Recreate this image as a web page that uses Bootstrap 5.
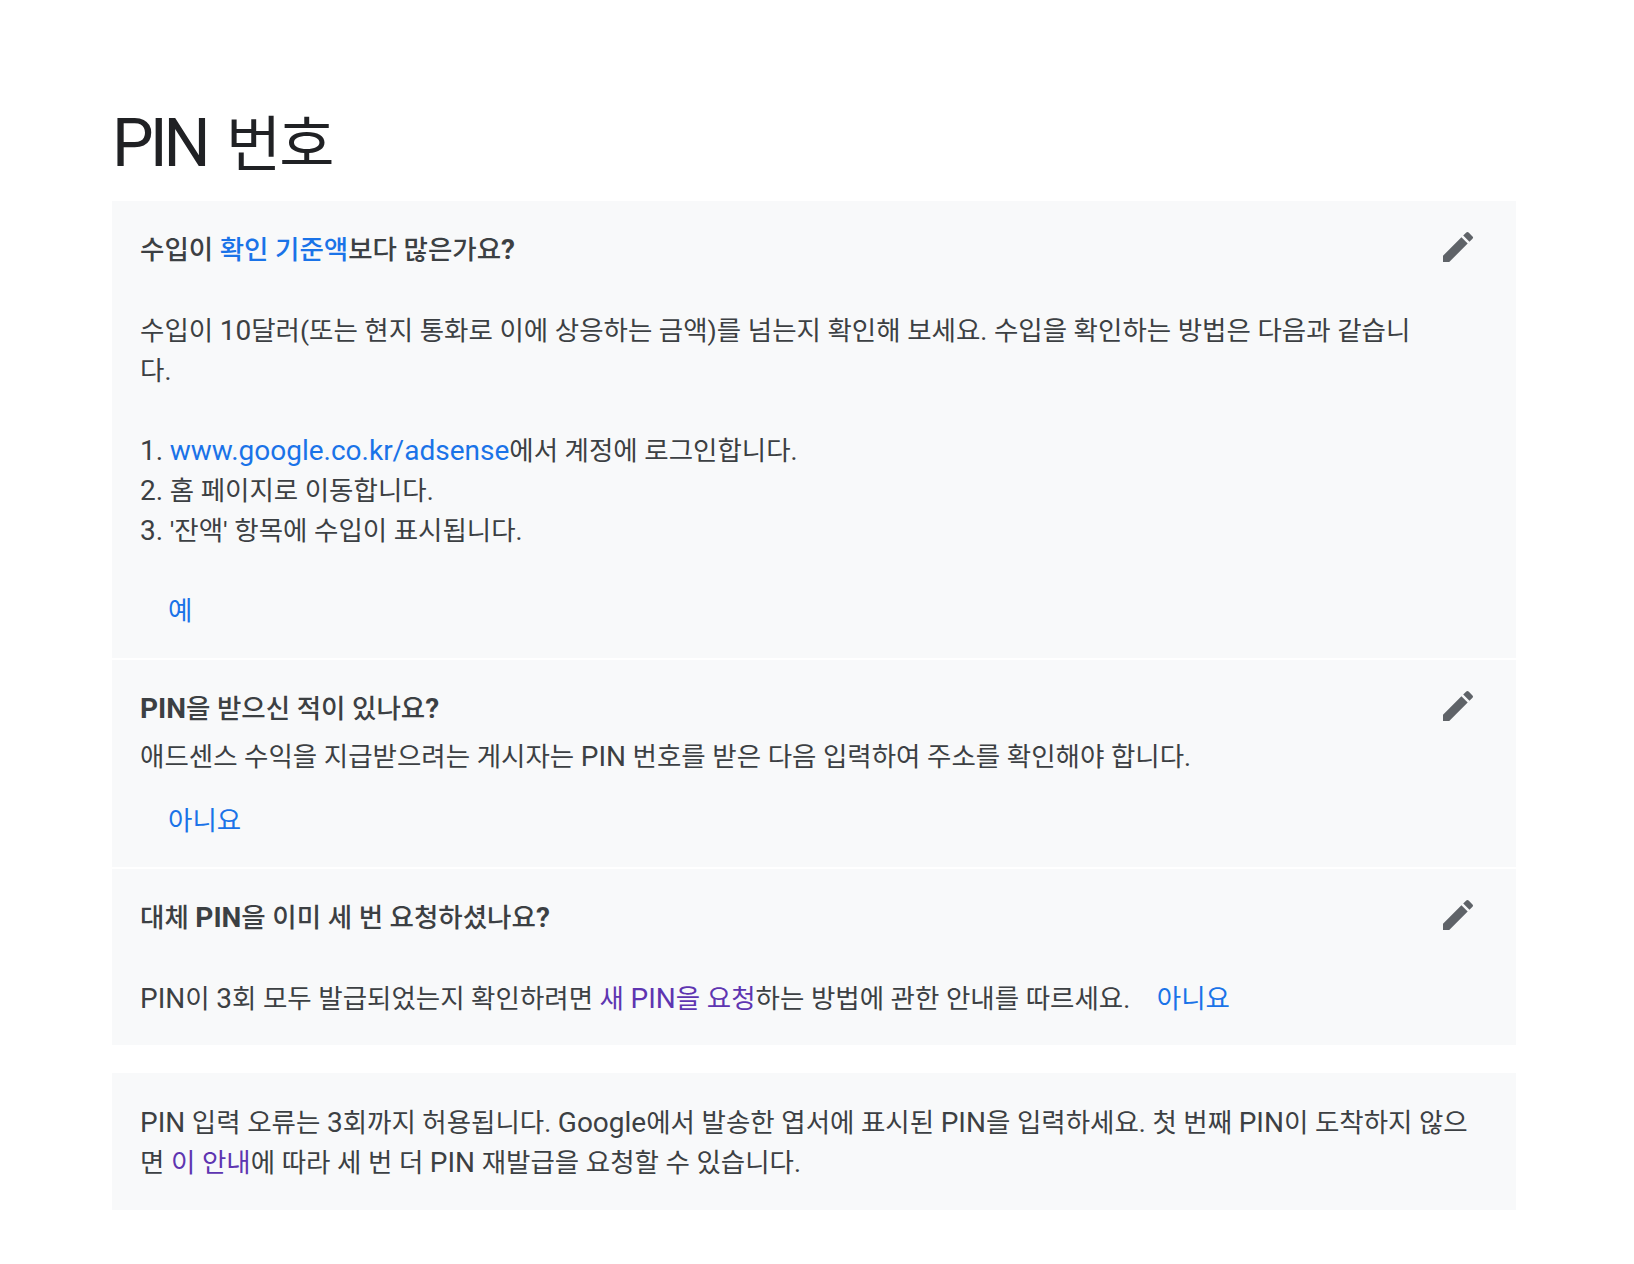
<!DOCTYPE html>
<html lang="ko">
<head>
    <meta charset="UTF-8">
    <meta name="viewport" content="width=device-width, initial-scale=1.0">
    <title>PIN 번호</title>
    <link href="https://cdn.jsdelivr.net/npm/bootstrap@5.3.3/dist/css/bootstrap.min.css" rel="stylesheet">
    <style>
        body {
            font-family: Roboto, "Noto Sans CJK KR", sans-serif;
            color: #3c4043;
            background: #fff;
            font-size: 26.5px;
            line-height: 40px;
        }
        .page-wrap {
            padding: 104px 118px 0 112px;
        }
        .page-title {
            font-size: 60px;
            line-height: 80px;
            font-weight: 400;
            color: #202124;
            margin: 0 0 15px 0;
            letter-spacing: -2px;
        }
        .page-title .lat {
            font-size: 66px;
            letter-spacing: -4px;
            word-spacing: 7px;
        }
        .lat { font-size: 28px; }
        .step-box {
            background: #f8f9fa;
            padding: 0 28px;
        }
        .step-box + .step-box {
            border-top: 2px solid #fff;
        }
        .step-head {
            font-weight: 500;
            padding-top: 29px;
        }
        .step-head .lat { font-weight: 700; }
        .step-text {
            max-width: 1278px;
        }
        .spaced { margin-top: 40px; }
        .spaced-first { margin-top: 41px; }
        .answer { padding-left: 28px; }
        .answer-inline { padding-left: 20px; }
        .tight { margin-top: 8px; }
        .answer-gap { margin-top: 24px; }
        .end-a { padding-bottom: 27px; }
        .end-b { padding-bottom: 26px; }
        a { color: #1a73e8; text-decoration: none; }
        a.seen { color: #5e35b1; }
        .pencil { width: 40px; height: 40px; fill: #5f6368; flex-shrink: 0; margin: -3px 10px 0 0; }
        .note-box {
            background: #f8f9fa;
            padding: 30px 28px 27px;
            margin-top: 28px;
        }
    </style>
</head>
<body>
    <div class="page-wrap">
        <h1 class="page-title"><span class="lat">PIN </span>번호</h1>

        <div class="step-box end-a">
            <div class="d-flex justify-content-between step-head">
                <div>수입이 <a href="#">확인 기준액</a>보다 많은가요<span class="lat">?</span></div>
                <svg class="pencil" viewBox="0 0 24 24"><path d="M3 17.25V21h3.75L17.81 9.94l-3.75-3.75L3 17.25zM20.71 7.04a1 1 0 0 0 0-1.41l-2.34-2.34a1 1 0 0 0-1.41 0l-1.83 1.83 3.75 3.75 1.83-1.83z"/></svg>
            </div>
            <div class="step-text spaced-first">수입이 <span class="lat">10</span>달러(또는 현지 통화로 이에 상응하는 금액)를 넘는지 확인해 보세요. 수입을 확인하는 방법은 다음과 같습니다.</div>
            <div class="spaced"><span class="lat">1.</span> <a class="lat" href="#">www.google.co.kr/adsense</a>에서 계정에 로그인합니다.</div>
            <div><span class="lat">2.</span> 홈 페이지로 이동합니다.</div>
            <div><span class="lat">3.</span> '잔액' 항목에 수입이 표시됩니다.</div>
            <div class="spaced answer"><a href="#">예</a></div>
        </div>

        <div class="step-box end-b">
            <div class="d-flex justify-content-between step-head">
                <div><span class="lat">PIN</span>을 받으신 적이 있나요<span class="lat">?</span></div>
                <svg class="pencil" viewBox="0 0 24 24"><path d="M3 17.25V21h3.75L17.81 9.94l-3.75-3.75L3 17.25zM20.71 7.04a1 1 0 0 0 0-1.41l-2.34-2.34a1 1 0 0 0-1.41 0l-1.83 1.83 3.75 3.75 1.83-1.83z"/></svg>
            </div>
            <div class="tight">애드센스 수익을 지급받으려는 게시자는 <span class="lat">PIN</span> 번호를 받은 다음 입력하여 주소를 확인해야 합니다.</div>
            <div class="answer answer-gap"><a href="#">아니요</a></div>
        </div>

        <div class="step-box end-b">
            <div class="d-flex justify-content-between step-head">
                <div>대체 <span class="lat">PIN</span>을 이미 세 번 요청하셨나요<span class="lat">?</span></div>
                <svg class="pencil" viewBox="0 0 24 24"><path d="M3 17.25V21h3.75L17.81 9.94l-3.75-3.75L3 17.25zM20.71 7.04a1 1 0 0 0 0-1.41l-2.34-2.34a1 1 0 0 0-1.41 0l-1.83 1.83 3.75 3.75 1.83-1.83z"/></svg>
            </div>
            <div class="spaced-first"><span class="lat">PIN</span>이 <span class="lat">3</span>회 모두 발급되었는지 확인하려면 <a class="seen" href="#">새 <span class="lat">PIN</span>을 요청</a>하는 방법에 관한 안내를 따르세요. <a class="answer-inline" href="#">아니요</a></div>
        </div>

        <div class="note-box"><span class="lat">PIN</span> 입력 오류는 <span class="lat">3</span>회까지 허용됩니다. <span class="lat">Google</span>에서 발송한 엽서에 표시된 <span class="lat">PIN</span>을 입력하세요. 첫 번째 <span class="lat">PIN</span>이 도착하지 않으면 <a class="seen" href="#">이 안내</a>에 따라 세 번 더 <span class="lat">PIN</span> 재발급을 요청할 수 있습니다.</div>
    </div>
    <script src="https://cdn.jsdelivr.net/npm/bootstrap@5.3.3/dist/js/bootstrap.bundle.min.js"></script>
</body>
</html>
